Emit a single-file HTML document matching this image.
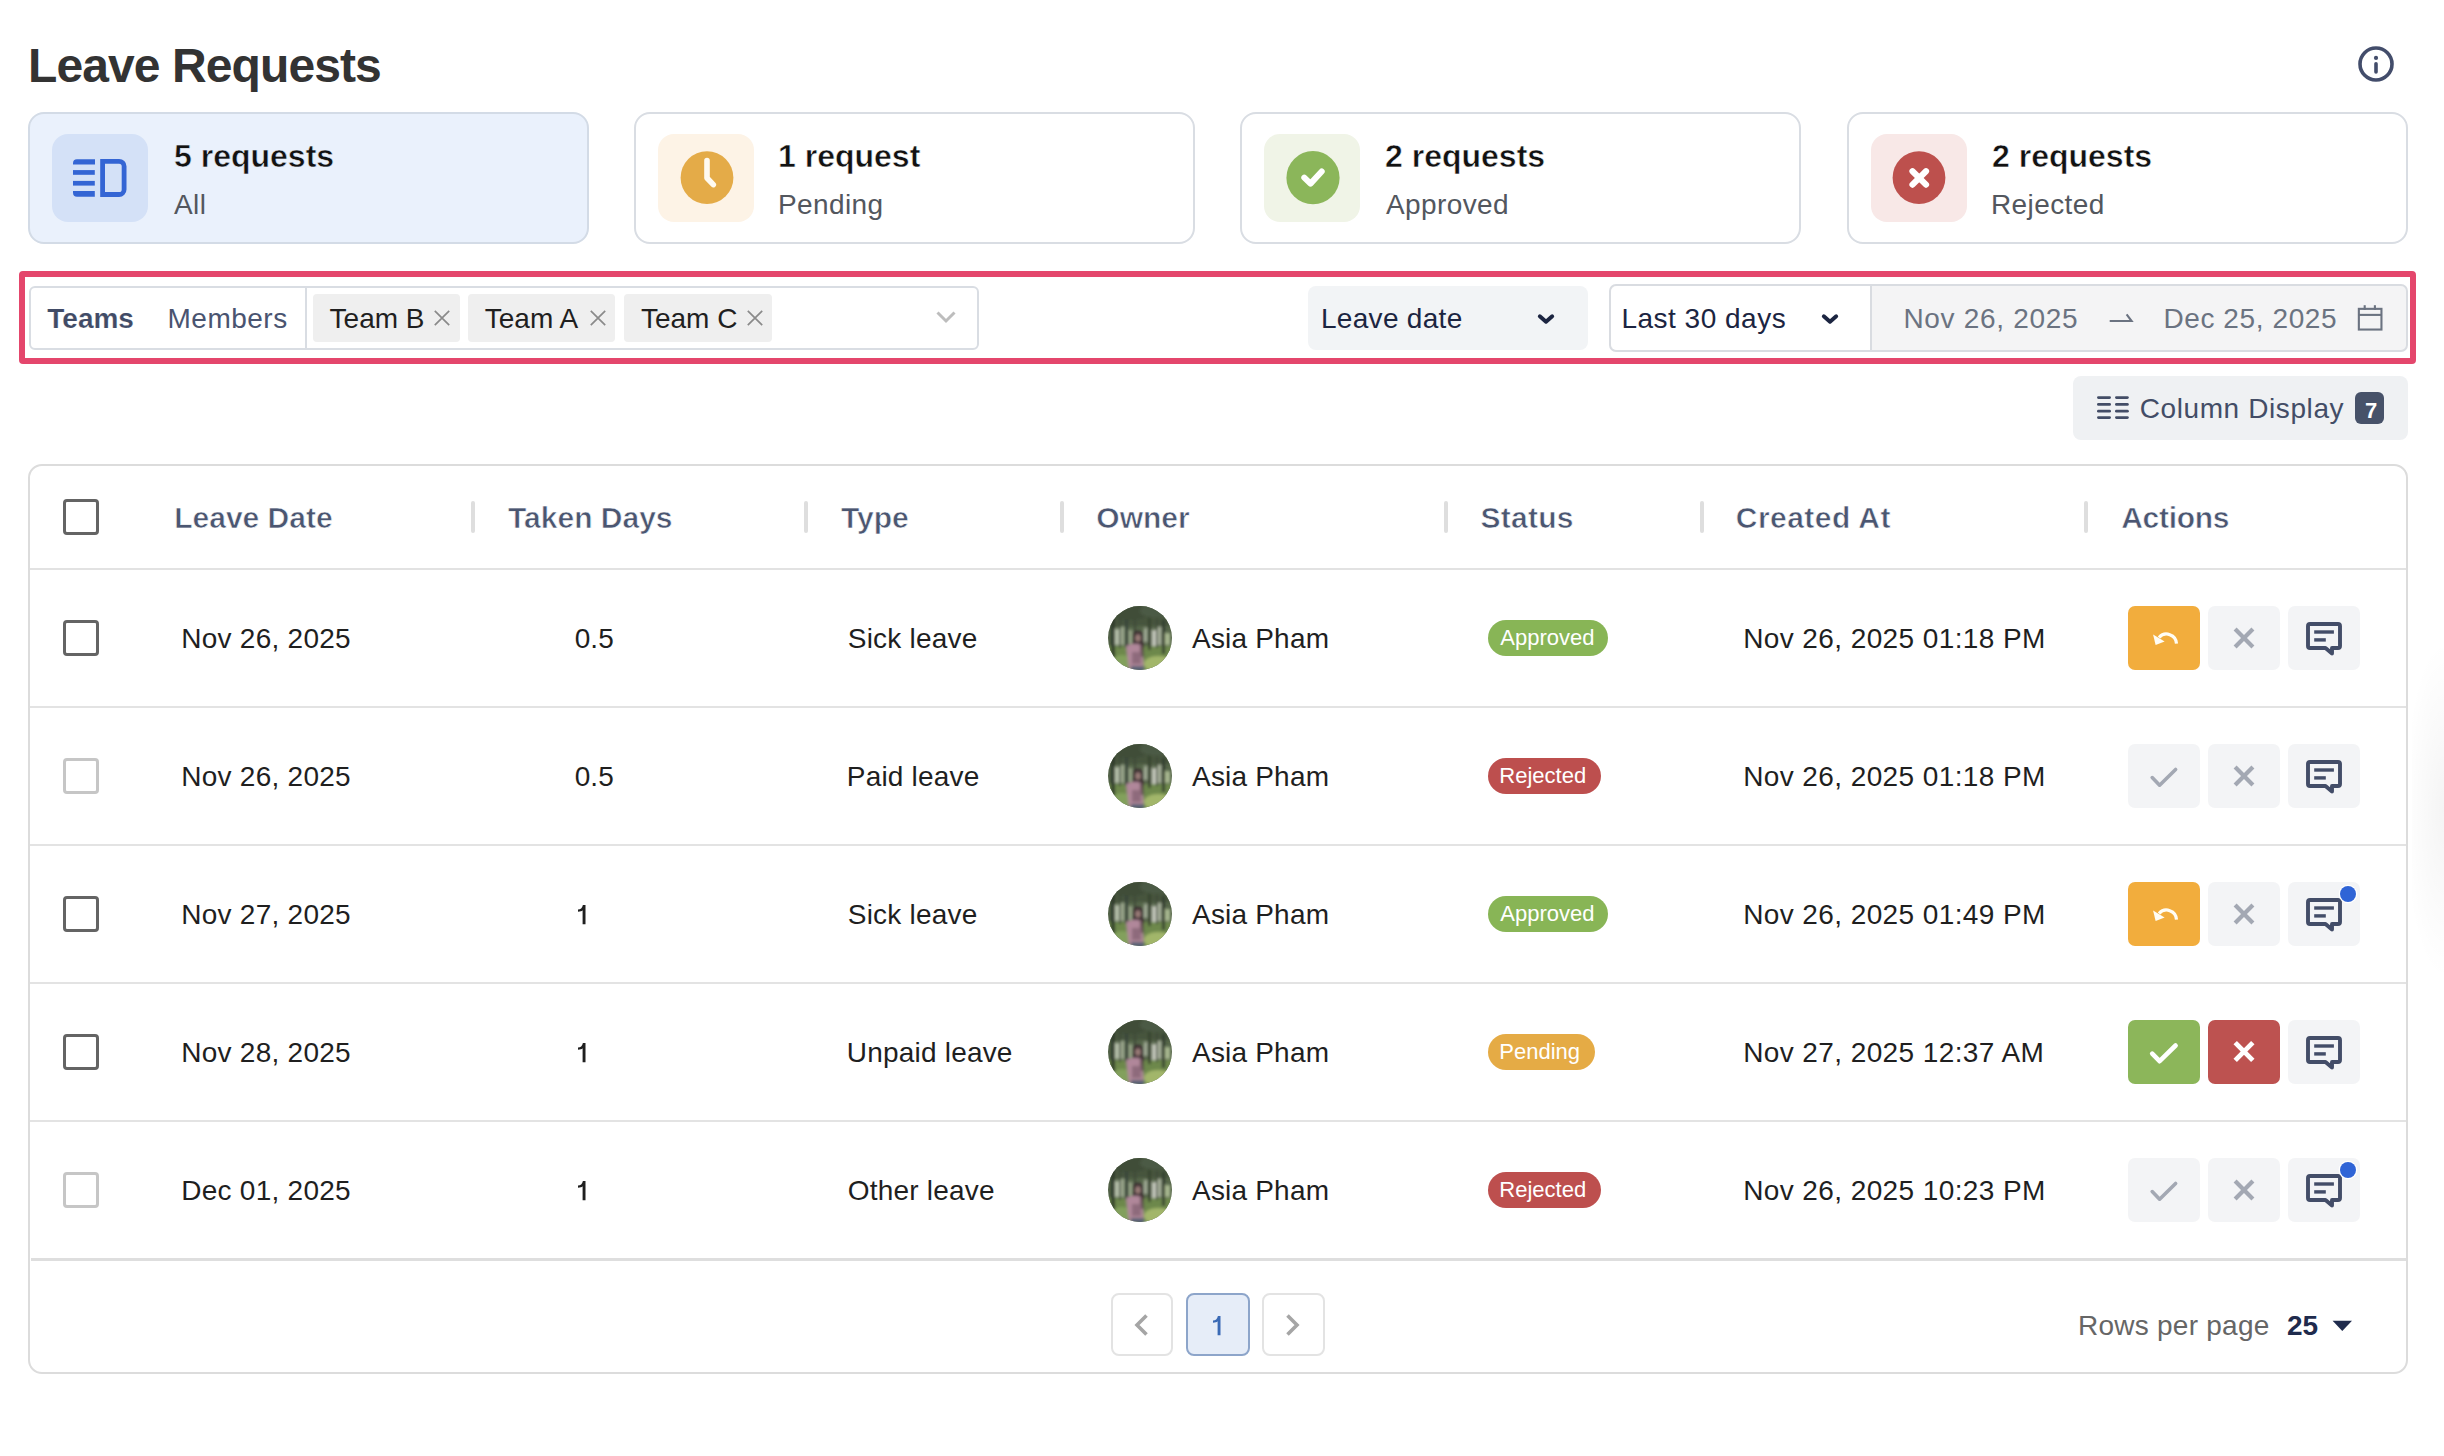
<!DOCTYPE html>
<html><head><meta charset="utf-8"><title>Leave Requests</title>
<style>
html,body{margin:0;padding:0;background:#ffffff;}
body{width:2444px;height:1456px;position:relative;overflow:hidden;font-family:'Liberation Sans', sans-serif;}
.t{position:absolute;line-height:0;white-space:nowrap;}
svg{display:block}
</style></head><body>
<svg style="position:absolute;left:2354px;top:42px" width="44" height="44" viewBox="0 0 44 44">
<circle cx="22" cy="22" r="16" fill="none" stroke="#434d6b" stroke-width="3.6"/>
<circle cx="22" cy="15.9" r="2.1" fill="#434d6b"/>
<line x1="22" y1="21.7" x2="22" y2="30" stroke="#434d6b" stroke-width="3.6" stroke-linecap="round"/>
</svg>
<div style="position:absolute;left:28px;top:112px;width:561px;height:132px;box-sizing:border-box;background:#eaf1fc;border:2px solid #d3dbe6;border-radius:16px;"></div>
<div style="position:absolute;left:52px;top:134px;width:96px;height:88px;box-sizing:border-box;background:#d4e1f7;border-radius:16px;"></div>
<div style="position:absolute;left:634px;top:112px;width:561px;height:132px;box-sizing:border-box;background:#ffffff;border:2px solid #d9dde3;border-radius:16px;"></div>
<div style="position:absolute;left:658px;top:134px;width:96px;height:88px;box-sizing:border-box;background:#fdf3e6;border-radius:16px;"></div>
<div style="position:absolute;left:1240px;top:112px;width:561px;height:132px;box-sizing:border-box;background:#ffffff;border:2px solid #d9dde3;border-radius:16px;"></div>
<div style="position:absolute;left:1264px;top:134px;width:96px;height:88px;box-sizing:border-box;background:#f0f4e7;border-radius:16px;"></div>
<div style="position:absolute;left:1847px;top:112px;width:561px;height:132px;box-sizing:border-box;background:#ffffff;border:2px solid #d9dde3;border-radius:16px;"></div>
<div style="position:absolute;left:1871px;top:134px;width:96px;height:88px;box-sizing:border-box;background:#f8e8e7;border-radius:16px;"></div>
<svg style="position:absolute;left:60px;top:150px" width="80" height="56" viewBox="0 0 80 56">
<g fill="#3465d4">
<path d="M13 9.3 h22 v5.2 h-22 a4 4 0 0 1 0 0 v-1.2 a4 4 0 0 1 4 -4 z"/>
<rect x="13" y="20.1" width="21.8" height="4.7"/>
<rect x="13" y="30.9" width="21.8" height="4.7"/>
<path d="M13 41 h21.8 v5.8 h-17.8 a4 4 0 0 1 -4 -4 z"/>
</g>
<path d="M42.6 11.3 h16.5 a5 5 0 0 1 5 5 v23.2 a5 5 0 0 1 -5 5 h-16.5 z" fill="none" stroke="#3465d4" stroke-width="4.8"/>
</svg>
<svg style="position:absolute;left:674px;top:145px" width="66" height="66" viewBox="0 0 66 66">
<circle cx="33" cy="32.7" r="26.4" fill="#e4ab48"/>
<path d="M33 15.5 V33 L39.3 39.6" fill="none" stroke="#fffaf0" stroke-width="5.6" stroke-linecap="round" stroke-linejoin="round"/>
</svg>
<svg style="position:absolute;left:1280px;top:145px" width="66" height="66" viewBox="0 0 66 66">
<circle cx="33" cy="32.7" r="26.6" fill="#8bb65a"/>
<path d="M24.3 32.6 L30.5 38.6 L41.7 26.5" fill="none" stroke="#ffffff" stroke-width="6" stroke-linecap="round" stroke-linejoin="round"/>
</svg>
<svg style="position:absolute;left:1886px;top:145px" width="66" height="66" viewBox="0 0 66 66">
<circle cx="33" cy="32.7" r="26.4" fill="#bd504d"/>
<path d="M26.5 26.2 L40 39.6 M40 26.2 L26.5 39.6" fill="none" stroke="#ffffff" stroke-width="6.2" stroke-linecap="round"/>
</svg>
<div style="position:absolute;left:19px;top:271px;width:2397px;height:93px;box-sizing:border-box;border:6px solid #e4466c;border-radius:4px;"></div>
<div style="position:absolute;left:29px;top:286px;width:950px;height:64px;box-sizing:border-box;border:2px solid #d9dde3;border-radius:6px;background:#fff;"></div>
<div style="position:absolute;left:305px;top:288px;width:2px;height:60px;box-sizing:border-box;background:#d9dde3;"></div>
<div style="position:absolute;left:313px;top:294px;width:146.7px;height:48px;box-sizing:border-box;background:#efefef;border-radius:4px;"></div>
<svg style="position:absolute;left:432.0px;top:308px" width="20" height="20" viewBox="0 0 20 20"><path d="M2.8 2.8 L17.2 17.2 M17.2 2.8 L2.8 17.2" stroke="#8a8a8a" stroke-width="1.7" fill="none"/></svg>
<div style="position:absolute;left:468.2px;top:294px;width:147.3px;height:48px;box-sizing:border-box;background:#efefef;border-radius:4px;"></div>
<svg style="position:absolute;left:587.8px;top:308px" width="20" height="20" viewBox="0 0 20 20"><path d="M2.8 2.8 L17.2 17.2 M17.2 2.8 L2.8 17.2" stroke="#8a8a8a" stroke-width="1.7" fill="none"/></svg>
<div style="position:absolute;left:624.3px;top:294px;width:148.20000000000005px;height:48px;box-sizing:border-box;background:#efefef;border-radius:4px;"></div>
<svg style="position:absolute;left:744.8px;top:308px" width="20" height="20" viewBox="0 0 20 20"><path d="M2.8 2.8 L17.2 17.2 M17.2 2.8 L2.8 17.2" stroke="#8a8a8a" stroke-width="1.7" fill="none"/></svg>
<svg style="position:absolute;left:934px;top:307px" width="24" height="20" viewBox="0 0 24 20"><path d="M3.5 5.5 L12 14 L20.5 5.5" stroke="#bdbdbd" stroke-width="3" fill="none"/></svg>
<div style="position:absolute;left:1308px;top:286px;width:280px;height:64px;box-sizing:border-box;background:#f2f4f6;border-radius:8px;"></div>
<svg style="position:absolute;left:1534px;top:308px" width="24" height="20" viewBox="0 0 24 20"><path d="M5.8 8.2 L12 13.8 L18.2 8.2" stroke="#1c2541" stroke-width="3.9" fill="none" stroke-linecap="round" stroke-linejoin="round"/></svg>
<div style="position:absolute;left:1608.5px;top:284px;width:799.5px;height:68px;box-sizing:border-box;border:2px solid #d9dce1;border-radius:7px;background:#f4f4f5;"></div>
<div style="position:absolute;left:1610.5px;top:286px;width:259.5px;height:64px;box-sizing:border-box;background:#fff;border-radius:6px 0 0 6px;"></div>
<div style="position:absolute;left:1869.5px;top:286px;width:2.0px;height:64px;box-sizing:border-box;background:#d9dce1;"></div>
<svg style="position:absolute;left:1818px;top:308px" width="24" height="20" viewBox="0 0 24 20"><path d="M5.8 8.2 L12 13.8 L18.2 8.2" stroke="#1c2541" stroke-width="3.9" fill="none" stroke-linecap="round" stroke-linejoin="round"/></svg>
<svg style="position:absolute;left:2106px;top:308px" width="30" height="20" viewBox="0 0 30 20"><path d="M3.7 13 H25.6 L20.6 6.4" stroke="#6b7381" stroke-width="2.1" fill="none" stroke-linejoin="miter"/></svg>
<svg style="position:absolute;left:2354px;top:302px" width="34" height="32" viewBox="0 0 34 32">
<rect x="4.85" y="6.85" width="22.6" height="20.7" fill="none" stroke="#6b7381" stroke-width="2.1"/>
<line x1="4.85" y1="12.9" x2="27.45" y2="12.9" stroke="#6b7381" stroke-width="2.1"/>
<line x1="10.7" y1="3.2" x2="10.7" y2="8" stroke="#6b7381" stroke-width="2.1"/>
<line x1="20.9" y1="3.2" x2="20.9" y2="8" stroke="#6b7381" stroke-width="2.1"/>
</svg>
<div style="position:absolute;left:2073px;top:376px;width:335px;height:64px;box-sizing:border-box;background:#eff1f3;border-radius:8px;"></div>
<svg style="position:absolute;left:2093px;top:392px" width="40" height="30" viewBox="0 0 40 30">
<g stroke="#434d66" stroke-width="2.8" stroke-linecap="round">
<line x1="5.4" y1="5.6" x2="16.6" y2="5.6"/><line x1="5.4" y1="12.4" x2="16.6" y2="12.4"/><line x1="5.4" y1="19.2" x2="16.6" y2="19.2"/><line x1="5.4" y1="25.6" x2="16.6" y2="25.6"/>
<line x1="23.4" y1="5.6" x2="34.4" y2="5.6"/><line x1="23.4" y1="12.4" x2="34.4" y2="12.4"/><line x1="23.4" y1="19.2" x2="34.4" y2="19.2"/><line x1="23.4" y1="25.6" x2="34.4" y2="25.6"/>
</g></svg>
<div style="position:absolute;left:2355px;top:392px;width:29px;height:32px;box-sizing:border-box;background:#475269;border-radius:6px;"></div>
<div style="position:absolute;left:28px;top:464px;width:2380px;height:910px;box-sizing:border-box;border:2px solid #dcdcdc;border-radius:14px;background:#fff;"></div>
<div style="position:absolute;left:30px;top:568px;width:2376px;height:2px;box-sizing:border-box;background:#e2e2e2;"></div>
<div style="position:absolute;left:63.2px;top:499px;width:35.599999999999994px;height:35.799999999999955px;box-sizing:border-box;border:3.8px solid #646464;border-radius:4px;"></div>
<div style="position:absolute;left:471px;top:501px;width:4px;height:32px;box-sizing:border-box;background:#dedede;border-radius:2px;"></div>
<div style="position:absolute;left:804px;top:501px;width:4px;height:32px;box-sizing:border-box;background:#dedede;border-radius:2px;"></div>
<div style="position:absolute;left:1060px;top:501px;width:4px;height:32px;box-sizing:border-box;background:#dedede;border-radius:2px;"></div>
<div style="position:absolute;left:1444px;top:501px;width:4px;height:32px;box-sizing:border-box;background:#dedede;border-radius:2px;"></div>
<div style="position:absolute;left:1699.5px;top:501px;width:4.0px;height:32px;box-sizing:border-box;background:#dedede;border-radius:2px;"></div>
<div style="position:absolute;left:2083.5px;top:501px;width:4.0px;height:32px;box-sizing:border-box;background:#dedede;border-radius:2px;"></div>
<div style="position:absolute;left:30px;top:706px;width:2376px;height:2px;box-sizing:border-box;background:#e3e3e3;"></div>
<div style="position:absolute;left:63.2px;top:620px;width:35.599999999999994px;height:35.799999999999955px;box-sizing:border-box;border:3.8px solid #646464;border-radius:4px;"></div>
<div style="position:absolute;left:1108px;top:606px;width:64px;height:64px;border-radius:50%;overflow:hidden"><svg width="64" height="64" viewBox="0 0 64 64"><defs><filter id="bl0" x="-20%" y="-20%" width="140%" height="140%"><feGaussianBlur stdDeviation="1.35"/></filter></defs>
<rect width="64" height="64" fill="#56664a"/>
<g filter="url(#bl0)">
<rect x="-4" y="-4" width="72" height="24" fill="#46553e"/>
<rect x="-4" y="40" width="72" height="28" fill="#6d884c"/>
<ellipse cx="50" cy="58" rx="14" ry="8" fill="#a2b66a"/>
<ellipse cx="14" cy="56" rx="10" ry="7" fill="#82a05c"/>
<rect x="7" y="23" width="4" height="16" fill="#b8c2ac"/>
<rect x="13" y="21" width="3" height="18" fill="#a6b298"/>
<rect x="21" y="24" width="3" height="14" fill="#9eab8e"/>
<rect x="36" y="22" width="3" height="14" fill="#aab4a0"/>
<rect x="44" y="24" width="4" height="16" fill="#c6c9be"/>
<rect x="50" y="21" width="3" height="18" fill="#b2baa6"/>
<rect x="57" y="27" width="5" height="12" fill="#a8b890"/>
<rect x="3" y="12" width="4" height="40" fill="#2e3a2a"/>
<rect x="11" y="10" width="2" height="32" fill="#3a4636"/>
<rect x="17" y="12" width="3" height="30" fill="#38443a"/>
<rect x="26" y="8" width="2" height="22" fill="#3e4a38"/>
<rect x="40" y="10" width="3" height="34" fill="#37432f"/>
<rect x="48" y="12" width="2" height="30" fill="#3d4938"/>
<rect x="54" y="14" width="3" height="34" fill="#323e2d"/>
<ellipse cx="22" cy="6" rx="20" ry="8" fill="#3f4d38"/>
<ellipse cx="48" cy="5" rx="16" ry="7" fill="#4b5a44"/>
<path d="M25 27 Q30 22 35 27 L36 42 L24 42 Z" fill="#3b2e30"/>
<ellipse cx="30" cy="32" rx="2.8" ry="3.8" fill="#9a7c78"/>
<path d="M18 40 Q25 36 34 39 L36 63 L21 64 Z" fill="#b0879a"/>
<rect x="32" y="37" width="4" height="14" fill="#3b2e30" opacity="0.55"/>
<rect x="24" y="46" width="9" height="12" fill="#8e6a7c"/>
<rect x="23" y="60" width="13" height="6" fill="#5a6274"/>
</g></svg>
</div>
<div style="position:absolute;left:1488px;top:620px;width:120px;height:36px;box-sizing:border-box;background:#88b556;border-radius:18px;"></div>
<div style="position:absolute;left:2128px;top:606px;width:72px;height:64px;box-sizing:border-box;background:#f2ad3d;border-radius:7px;"></div>
<svg style="position:absolute;left:2128px;top:606px" width="72" height="64" viewBox="0 0 72 64">
<path d="M48.5 37.6 A10 10 0 0 0 31 31.5" fill="none" stroke="#fffdf5" stroke-width="3.2"/>
<path d="M25.1 28.6 L27.6 38.9 L36.6 35.4 Z" fill="#fffdf5"/></svg>
<div style="position:absolute;left:2208px;top:606px;width:72px;height:64px;box-sizing:border-box;background:#f3f4f6;border-radius:7px;"></div>
<svg style="position:absolute;left:2208px;top:606px" width="72" height="64" viewBox="0 0 72 64"><path d="M27.1 23.1 L44.9 40.9 M44.9 23.1 L27.1 40.9" stroke="#a3a8b3" stroke-width="4.2" fill="none"/></svg>
<div style="position:absolute;left:2288px;top:606px;width:72px;height:64px;box-sizing:border-box;background:#f3f4f6;border-radius:7px;"></div>
<svg style="position:absolute;left:2288px;top:606px" width="72" height="64" viewBox="0 0 72 64">
<path d="M22 18 H50 a2 2 0 0 1 2 2 V40 a2 2 0 0 1 -2 2 H44 V47.5 L37.5 42 H22 a2 2 0 0 1 -2 -2 V20 a2 2 0 0 1 2 -2 Z" fill="none" stroke="#434d68" stroke-width="3.9" stroke-linejoin="round"/>
<rect x="26.2" y="24.3" width="19.7" height="3.4" fill="#434d68"/>
<rect x="26.2" y="32.2" width="11.6" height="3.4" fill="#434d68"/>
</svg>
<div style="position:absolute;left:30px;top:844px;width:2376px;height:2px;box-sizing:border-box;background:#e3e3e3;"></div>
<div style="position:absolute;left:63.2px;top:758px;width:35.599999999999994px;height:35.799999999999955px;box-sizing:border-box;border:3.8px solid #c6c6c6;border-radius:4px;"></div>
<div style="position:absolute;left:1108px;top:744px;width:64px;height:64px;border-radius:50%;overflow:hidden"><svg width="64" height="64" viewBox="0 0 64 64"><defs><filter id="bl1" x="-20%" y="-20%" width="140%" height="140%"><feGaussianBlur stdDeviation="1.35"/></filter></defs>
<rect width="64" height="64" fill="#56664a"/>
<g filter="url(#bl1)">
<rect x="-4" y="-4" width="72" height="24" fill="#46553e"/>
<rect x="-4" y="40" width="72" height="28" fill="#6d884c"/>
<ellipse cx="50" cy="58" rx="14" ry="8" fill="#a2b66a"/>
<ellipse cx="14" cy="56" rx="10" ry="7" fill="#82a05c"/>
<rect x="7" y="23" width="4" height="16" fill="#b8c2ac"/>
<rect x="13" y="21" width="3" height="18" fill="#a6b298"/>
<rect x="21" y="24" width="3" height="14" fill="#9eab8e"/>
<rect x="36" y="22" width="3" height="14" fill="#aab4a0"/>
<rect x="44" y="24" width="4" height="16" fill="#c6c9be"/>
<rect x="50" y="21" width="3" height="18" fill="#b2baa6"/>
<rect x="57" y="27" width="5" height="12" fill="#a8b890"/>
<rect x="3" y="12" width="4" height="40" fill="#2e3a2a"/>
<rect x="11" y="10" width="2" height="32" fill="#3a4636"/>
<rect x="17" y="12" width="3" height="30" fill="#38443a"/>
<rect x="26" y="8" width="2" height="22" fill="#3e4a38"/>
<rect x="40" y="10" width="3" height="34" fill="#37432f"/>
<rect x="48" y="12" width="2" height="30" fill="#3d4938"/>
<rect x="54" y="14" width="3" height="34" fill="#323e2d"/>
<ellipse cx="22" cy="6" rx="20" ry="8" fill="#3f4d38"/>
<ellipse cx="48" cy="5" rx="16" ry="7" fill="#4b5a44"/>
<path d="M25 27 Q30 22 35 27 L36 42 L24 42 Z" fill="#3b2e30"/>
<ellipse cx="30" cy="32" rx="2.8" ry="3.8" fill="#9a7c78"/>
<path d="M18 40 Q25 36 34 39 L36 63 L21 64 Z" fill="#b0879a"/>
<rect x="32" y="37" width="4" height="14" fill="#3b2e30" opacity="0.55"/>
<rect x="24" y="46" width="9" height="12" fill="#8e6a7c"/>
<rect x="23" y="60" width="13" height="6" fill="#5a6274"/>
</g></svg>
</div>
<div style="position:absolute;left:1488px;top:758px;width:113px;height:36px;box-sizing:border-box;background:#bd4f4e;border-radius:18px;"></div>
<div style="position:absolute;left:2128px;top:744px;width:72px;height:64px;box-sizing:border-box;background:#f3f4f6;border-radius:7px;"></div>
<svg style="position:absolute;left:2128px;top:744px" width="72" height="64" viewBox="0 0 72 64"><path d="M24.2 33.6 L31.6 41.2 L47.6 25.5" stroke="#a3a8b3" stroke-width="3.6" fill="none" stroke-linecap="round" stroke-linejoin="round"/></svg>
<div style="position:absolute;left:2208px;top:744px;width:72px;height:64px;box-sizing:border-box;background:#f3f4f6;border-radius:7px;"></div>
<svg style="position:absolute;left:2208px;top:744px" width="72" height="64" viewBox="0 0 72 64"><path d="M27.1 23.1 L44.9 40.9 M44.9 23.1 L27.1 40.9" stroke="#a3a8b3" stroke-width="4.2" fill="none"/></svg>
<div style="position:absolute;left:2288px;top:744px;width:72px;height:64px;box-sizing:border-box;background:#f3f4f6;border-radius:7px;"></div>
<svg style="position:absolute;left:2288px;top:744px" width="72" height="64" viewBox="0 0 72 64">
<path d="M22 18 H50 a2 2 0 0 1 2 2 V40 a2 2 0 0 1 -2 2 H44 V47.5 L37.5 42 H22 a2 2 0 0 1 -2 -2 V20 a2 2 0 0 1 2 -2 Z" fill="none" stroke="#434d68" stroke-width="3.9" stroke-linejoin="round"/>
<rect x="26.2" y="24.3" width="19.7" height="3.4" fill="#434d68"/>
<rect x="26.2" y="32.2" width="11.6" height="3.4" fill="#434d68"/>
</svg>
<div style="position:absolute;left:30px;top:982px;width:2376px;height:2px;box-sizing:border-box;background:#e3e3e3;"></div>
<div style="position:absolute;left:63.2px;top:896px;width:35.599999999999994px;height:35.799999999999955px;box-sizing:border-box;border:3.8px solid #646464;border-radius:4px;"></div>
<svg style="position:absolute;left:577.9px;top:904.6px" width="9" height="20" viewBox="0 0 9 20"><path d="M7.5 0 V19.3 H4.6 V5.2 C3.8 6.2 2.2 6.6 0 6.7 V4.6 C2.6 4.4 4.2 3.2 4.9 0 Z" fill="#1f1f1f"/></svg>
<div style="position:absolute;left:1108px;top:882px;width:64px;height:64px;border-radius:50%;overflow:hidden"><svg width="64" height="64" viewBox="0 0 64 64"><defs><filter id="bl2" x="-20%" y="-20%" width="140%" height="140%"><feGaussianBlur stdDeviation="1.35"/></filter></defs>
<rect width="64" height="64" fill="#56664a"/>
<g filter="url(#bl2)">
<rect x="-4" y="-4" width="72" height="24" fill="#46553e"/>
<rect x="-4" y="40" width="72" height="28" fill="#6d884c"/>
<ellipse cx="50" cy="58" rx="14" ry="8" fill="#a2b66a"/>
<ellipse cx="14" cy="56" rx="10" ry="7" fill="#82a05c"/>
<rect x="7" y="23" width="4" height="16" fill="#b8c2ac"/>
<rect x="13" y="21" width="3" height="18" fill="#a6b298"/>
<rect x="21" y="24" width="3" height="14" fill="#9eab8e"/>
<rect x="36" y="22" width="3" height="14" fill="#aab4a0"/>
<rect x="44" y="24" width="4" height="16" fill="#c6c9be"/>
<rect x="50" y="21" width="3" height="18" fill="#b2baa6"/>
<rect x="57" y="27" width="5" height="12" fill="#a8b890"/>
<rect x="3" y="12" width="4" height="40" fill="#2e3a2a"/>
<rect x="11" y="10" width="2" height="32" fill="#3a4636"/>
<rect x="17" y="12" width="3" height="30" fill="#38443a"/>
<rect x="26" y="8" width="2" height="22" fill="#3e4a38"/>
<rect x="40" y="10" width="3" height="34" fill="#37432f"/>
<rect x="48" y="12" width="2" height="30" fill="#3d4938"/>
<rect x="54" y="14" width="3" height="34" fill="#323e2d"/>
<ellipse cx="22" cy="6" rx="20" ry="8" fill="#3f4d38"/>
<ellipse cx="48" cy="5" rx="16" ry="7" fill="#4b5a44"/>
<path d="M25 27 Q30 22 35 27 L36 42 L24 42 Z" fill="#3b2e30"/>
<ellipse cx="30" cy="32" rx="2.8" ry="3.8" fill="#9a7c78"/>
<path d="M18 40 Q25 36 34 39 L36 63 L21 64 Z" fill="#b0879a"/>
<rect x="32" y="37" width="4" height="14" fill="#3b2e30" opacity="0.55"/>
<rect x="24" y="46" width="9" height="12" fill="#8e6a7c"/>
<rect x="23" y="60" width="13" height="6" fill="#5a6274"/>
</g></svg>
</div>
<div style="position:absolute;left:1488px;top:896px;width:120px;height:36px;box-sizing:border-box;background:#88b556;border-radius:18px;"></div>
<div style="position:absolute;left:2128px;top:882px;width:72px;height:64px;box-sizing:border-box;background:#f2ad3d;border-radius:7px;"></div>
<svg style="position:absolute;left:2128px;top:882px" width="72" height="64" viewBox="0 0 72 64">
<path d="M48.5 37.6 A10 10 0 0 0 31 31.5" fill="none" stroke="#fffdf5" stroke-width="3.2"/>
<path d="M25.1 28.6 L27.6 38.9 L36.6 35.4 Z" fill="#fffdf5"/></svg>
<div style="position:absolute;left:2208px;top:882px;width:72px;height:64px;box-sizing:border-box;background:#f3f4f6;border-radius:7px;"></div>
<svg style="position:absolute;left:2208px;top:882px" width="72" height="64" viewBox="0 0 72 64"><path d="M27.1 23.1 L44.9 40.9 M44.9 23.1 L27.1 40.9" stroke="#a3a8b3" stroke-width="4.2" fill="none"/></svg>
<div style="position:absolute;left:2288px;top:882px;width:72px;height:64px;box-sizing:border-box;background:#f3f4f6;border-radius:7px;"></div>
<svg style="position:absolute;left:2288px;top:882px" width="72" height="64" viewBox="0 0 72 64">
<path d="M22 18 H50 a2 2 0 0 1 2 2 V40 a2 2 0 0 1 -2 2 H44 V47.5 L37.5 42 H22 a2 2 0 0 1 -2 -2 V20 a2 2 0 0 1 2 -2 Z" fill="none" stroke="#434d68" stroke-width="3.9" stroke-linejoin="round"/>
<rect x="26.2" y="24.3" width="19.7" height="3.4" fill="#434d68"/>
<rect x="26.2" y="32.2" width="11.6" height="3.4" fill="#434d68"/>
</svg>
<div style="position:absolute;left:2339.7000000000003px;top:885.55px;width:16.4px;height:16.4px;border-radius:50%;background:#2f64d6;box-shadow:0 0 0 1.3px #fff;"></div>
<div style="position:absolute;left:30px;top:1120px;width:2376px;height:2px;box-sizing:border-box;background:#e3e3e3;"></div>
<div style="position:absolute;left:63.2px;top:1034px;width:35.599999999999994px;height:35.799999999999955px;box-sizing:border-box;border:3.8px solid #646464;border-radius:4px;"></div>
<svg style="position:absolute;left:577.9px;top:1042.6px" width="9" height="20" viewBox="0 0 9 20"><path d="M7.5 0 V19.3 H4.6 V5.2 C3.8 6.2 2.2 6.6 0 6.7 V4.6 C2.6 4.4 4.2 3.2 4.9 0 Z" fill="#1f1f1f"/></svg>
<div style="position:absolute;left:1108px;top:1020px;width:64px;height:64px;border-radius:50%;overflow:hidden"><svg width="64" height="64" viewBox="0 0 64 64"><defs><filter id="bl3" x="-20%" y="-20%" width="140%" height="140%"><feGaussianBlur stdDeviation="1.35"/></filter></defs>
<rect width="64" height="64" fill="#56664a"/>
<g filter="url(#bl3)">
<rect x="-4" y="-4" width="72" height="24" fill="#46553e"/>
<rect x="-4" y="40" width="72" height="28" fill="#6d884c"/>
<ellipse cx="50" cy="58" rx="14" ry="8" fill="#a2b66a"/>
<ellipse cx="14" cy="56" rx="10" ry="7" fill="#82a05c"/>
<rect x="7" y="23" width="4" height="16" fill="#b8c2ac"/>
<rect x="13" y="21" width="3" height="18" fill="#a6b298"/>
<rect x="21" y="24" width="3" height="14" fill="#9eab8e"/>
<rect x="36" y="22" width="3" height="14" fill="#aab4a0"/>
<rect x="44" y="24" width="4" height="16" fill="#c6c9be"/>
<rect x="50" y="21" width="3" height="18" fill="#b2baa6"/>
<rect x="57" y="27" width="5" height="12" fill="#a8b890"/>
<rect x="3" y="12" width="4" height="40" fill="#2e3a2a"/>
<rect x="11" y="10" width="2" height="32" fill="#3a4636"/>
<rect x="17" y="12" width="3" height="30" fill="#38443a"/>
<rect x="26" y="8" width="2" height="22" fill="#3e4a38"/>
<rect x="40" y="10" width="3" height="34" fill="#37432f"/>
<rect x="48" y="12" width="2" height="30" fill="#3d4938"/>
<rect x="54" y="14" width="3" height="34" fill="#323e2d"/>
<ellipse cx="22" cy="6" rx="20" ry="8" fill="#3f4d38"/>
<ellipse cx="48" cy="5" rx="16" ry="7" fill="#4b5a44"/>
<path d="M25 27 Q30 22 35 27 L36 42 L24 42 Z" fill="#3b2e30"/>
<ellipse cx="30" cy="32" rx="2.8" ry="3.8" fill="#9a7c78"/>
<path d="M18 40 Q25 36 34 39 L36 63 L21 64 Z" fill="#b0879a"/>
<rect x="32" y="37" width="4" height="14" fill="#3b2e30" opacity="0.55"/>
<rect x="24" y="46" width="9" height="12" fill="#8e6a7c"/>
<rect x="23" y="60" width="13" height="6" fill="#5a6274"/>
</g></svg>
</div>
<div style="position:absolute;left:1488px;top:1034px;width:107px;height:36px;box-sizing:border-box;background:#e5ab45;border-radius:18px;"></div>
<div style="position:absolute;left:2128px;top:1020px;width:72px;height:64px;box-sizing:border-box;background:#8cb65a;border-radius:7px;"></div>
<svg style="position:absolute;left:2128px;top:1020px" width="72" height="64" viewBox="0 0 72 64"><path d="M24.2 33.6 L31.6 41.2 L47.6 25.5" stroke="#ffffff" stroke-width="4.6" fill="none" stroke-linecap="round" stroke-linejoin="round"/></svg>
<div style="position:absolute;left:2208px;top:1020px;width:72px;height:64px;box-sizing:border-box;background:#bd5250;border-radius:7px;"></div>
<svg style="position:absolute;left:2208px;top:1020px" width="72" height="64" viewBox="0 0 72 64"><path d="M27.2 22.6 L44.8 40.4 M44.8 22.6 L27.2 40.4" stroke="#ffffff" stroke-width="4.8" fill="none"/></svg>
<div style="position:absolute;left:2288px;top:1020px;width:72px;height:64px;box-sizing:border-box;background:#f3f4f6;border-radius:7px;"></div>
<svg style="position:absolute;left:2288px;top:1020px" width="72" height="64" viewBox="0 0 72 64">
<path d="M22 18 H50 a2 2 0 0 1 2 2 V40 a2 2 0 0 1 -2 2 H44 V47.5 L37.5 42 H22 a2 2 0 0 1 -2 -2 V20 a2 2 0 0 1 2 -2 Z" fill="none" stroke="#434d68" stroke-width="3.9" stroke-linejoin="round"/>
<rect x="26.2" y="24.3" width="19.7" height="3.4" fill="#434d68"/>
<rect x="26.2" y="32.2" width="11.6" height="3.4" fill="#434d68"/>
</svg>
<div style="position:absolute;left:63.2px;top:1172px;width:35.599999999999994px;height:35.799999999999955px;box-sizing:border-box;border:3.8px solid #c6c6c6;border-radius:4px;"></div>
<svg style="position:absolute;left:577.9px;top:1180.6px" width="9" height="20" viewBox="0 0 9 20"><path d="M7.5 0 V19.3 H4.6 V5.2 C3.8 6.2 2.2 6.6 0 6.7 V4.6 C2.6 4.4 4.2 3.2 4.9 0 Z" fill="#1f1f1f"/></svg>
<div style="position:absolute;left:1108px;top:1158px;width:64px;height:64px;border-radius:50%;overflow:hidden"><svg width="64" height="64" viewBox="0 0 64 64"><defs><filter id="bl4" x="-20%" y="-20%" width="140%" height="140%"><feGaussianBlur stdDeviation="1.35"/></filter></defs>
<rect width="64" height="64" fill="#56664a"/>
<g filter="url(#bl4)">
<rect x="-4" y="-4" width="72" height="24" fill="#46553e"/>
<rect x="-4" y="40" width="72" height="28" fill="#6d884c"/>
<ellipse cx="50" cy="58" rx="14" ry="8" fill="#a2b66a"/>
<ellipse cx="14" cy="56" rx="10" ry="7" fill="#82a05c"/>
<rect x="7" y="23" width="4" height="16" fill="#b8c2ac"/>
<rect x="13" y="21" width="3" height="18" fill="#a6b298"/>
<rect x="21" y="24" width="3" height="14" fill="#9eab8e"/>
<rect x="36" y="22" width="3" height="14" fill="#aab4a0"/>
<rect x="44" y="24" width="4" height="16" fill="#c6c9be"/>
<rect x="50" y="21" width="3" height="18" fill="#b2baa6"/>
<rect x="57" y="27" width="5" height="12" fill="#a8b890"/>
<rect x="3" y="12" width="4" height="40" fill="#2e3a2a"/>
<rect x="11" y="10" width="2" height="32" fill="#3a4636"/>
<rect x="17" y="12" width="3" height="30" fill="#38443a"/>
<rect x="26" y="8" width="2" height="22" fill="#3e4a38"/>
<rect x="40" y="10" width="3" height="34" fill="#37432f"/>
<rect x="48" y="12" width="2" height="30" fill="#3d4938"/>
<rect x="54" y="14" width="3" height="34" fill="#323e2d"/>
<ellipse cx="22" cy="6" rx="20" ry="8" fill="#3f4d38"/>
<ellipse cx="48" cy="5" rx="16" ry="7" fill="#4b5a44"/>
<path d="M25 27 Q30 22 35 27 L36 42 L24 42 Z" fill="#3b2e30"/>
<ellipse cx="30" cy="32" rx="2.8" ry="3.8" fill="#9a7c78"/>
<path d="M18 40 Q25 36 34 39 L36 63 L21 64 Z" fill="#b0879a"/>
<rect x="32" y="37" width="4" height="14" fill="#3b2e30" opacity="0.55"/>
<rect x="24" y="46" width="9" height="12" fill="#8e6a7c"/>
<rect x="23" y="60" width="13" height="6" fill="#5a6274"/>
</g></svg>
</div>
<div style="position:absolute;left:1488px;top:1172px;width:113px;height:36px;box-sizing:border-box;background:#bd4f4e;border-radius:18px;"></div>
<div style="position:absolute;left:2128px;top:1158px;width:72px;height:64px;box-sizing:border-box;background:#f3f4f6;border-radius:7px;"></div>
<svg style="position:absolute;left:2128px;top:1158px" width="72" height="64" viewBox="0 0 72 64"><path d="M24.2 33.6 L31.6 41.2 L47.6 25.5" stroke="#a3a8b3" stroke-width="3.6" fill="none" stroke-linecap="round" stroke-linejoin="round"/></svg>
<div style="position:absolute;left:2208px;top:1158px;width:72px;height:64px;box-sizing:border-box;background:#f3f4f6;border-radius:7px;"></div>
<svg style="position:absolute;left:2208px;top:1158px" width="72" height="64" viewBox="0 0 72 64"><path d="M27.1 23.1 L44.9 40.9 M44.9 23.1 L27.1 40.9" stroke="#a3a8b3" stroke-width="4.2" fill="none"/></svg>
<div style="position:absolute;left:2288px;top:1158px;width:72px;height:64px;box-sizing:border-box;background:#f3f4f6;border-radius:7px;"></div>
<svg style="position:absolute;left:2288px;top:1158px" width="72" height="64" viewBox="0 0 72 64">
<path d="M22 18 H50 a2 2 0 0 1 2 2 V40 a2 2 0 0 1 -2 2 H44 V47.5 L37.5 42 H22 a2 2 0 0 1 -2 -2 V20 a2 2 0 0 1 2 -2 Z" fill="none" stroke="#434d68" stroke-width="3.9" stroke-linejoin="round"/>
<rect x="26.2" y="24.3" width="19.7" height="3.4" fill="#434d68"/>
<rect x="26.2" y="32.2" width="11.6" height="3.4" fill="#434d68"/>
</svg>
<div style="position:absolute;left:2339.7000000000003px;top:1161.55px;width:16.4px;height:16.4px;border-radius:50%;background:#2f64d6;box-shadow:0 0 0 1.3px #fff;"></div>
<div style="position:absolute;left:31px;top:1258px;width:2375px;height:3px;box-sizing:border-box;background:#dedede;"></div>
<div style="position:absolute;left:1110.6px;top:1293.3px;width:62.90000000000009px;height:63.100000000000136px;box-sizing:border-box;border:2px solid #e3e3e3;border-radius:8px;background:#fff;"></div>
<div style="position:absolute;left:1262px;top:1293.3px;width:63.40000000000009px;height:63.100000000000136px;box-sizing:border-box;border:2px solid #e3e3e3;border-radius:8px;background:#fff;"></div>
<div style="position:absolute;left:1186.2px;top:1293.3px;width:63.59999999999991px;height:63.100000000000136px;box-sizing:border-box;border:2px solid #8da5ca;border-radius:8px;background:#e6edf8;"></div>
<svg style="position:absolute;left:1126px;top:1310px" width="30" height="30" viewBox="0 0 30 30"><path d="M20.5 5.5 L11 15 L20.5 24.5" stroke="#a5a5a5" stroke-width="3.6" fill="none"/></svg>
<svg style="position:absolute;left:1278px;top:1310px" width="30" height="30" viewBox="0 0 30 30"><path d="M9.5 5.5 L19 15 L9.5 24.5" stroke="#a5a5a5" stroke-width="3.6" fill="none"/></svg>
<svg style="position:absolute;left:1212.5px;top:1315.6px" width="9" height="20" viewBox="0 0 9 20"><path d="M7.5 0 V19.3 H4.6 V5.2 C3.8 6.2 2.2 6.6 0 6.7 V4.6 C2.6 4.4 4.2 3.2 4.9 0 Z" fill="#3a6ab5"/></svg>
<svg style="position:absolute;left:2330px;top:1318px" width="24" height="16" viewBox="0 0 24 16"><path d="M2.6 2.7 H22 L12.3 12.9 Z" fill="#1f2b4d"/></svg>
<div style="position:absolute;left:2412px;top:620px;width:32px;height:380px;background:radial-gradient(ellipse 40px 170px at 100% 50%, rgba(0,0,0,0.045), rgba(0,0,0,0));"></div>
<div class="t" style="left:28.00px;top:65.50px;font-size:48px;font-weight:700;color:#333333;letter-spacing:-0.9px;">Leave Requests</div>
<div class="t" style="left:174.00px;top:156.00px;font-size:32px;font-weight:700;color:#121212;letter-spacing:0px;-webkit-text-stroke:0.5px #eaf1fc;">5 requests</div>
<div class="t" style="left:174.00px;top:205.00px;font-size:28px;font-weight:400;color:#53575e;letter-spacing:0.4px;">All</div>
<div class="t" style="left:778.00px;top:156.00px;font-size:32px;font-weight:700;color:#121212;letter-spacing:0px;-webkit-text-stroke:0.5px #ffffff;">1 request</div>
<div class="t" style="left:778.00px;top:205.00px;font-size:28px;font-weight:400;color:#53575e;letter-spacing:0.4px;">Pending</div>
<div class="t" style="left:1385.00px;top:156.00px;font-size:32px;font-weight:700;color:#121212;letter-spacing:0px;-webkit-text-stroke:0.5px #ffffff;">2 requests</div>
<div class="t" style="left:1386.00px;top:205.00px;font-size:28px;font-weight:400;color:#53575e;letter-spacing:0.4px;">Approved</div>
<div class="t" style="left:1992.00px;top:156.00px;font-size:32px;font-weight:700;color:#121212;letter-spacing:0px;-webkit-text-stroke:0.5px #ffffff;">2 requests</div>
<div class="t" style="left:1991.00px;top:205.00px;font-size:28px;font-weight:400;color:#53575e;letter-spacing:0.4px;">Rejected</div>
<div class="t" style="left:47.30px;top:319.00px;font-size:28px;font-weight:700;color:#414b66;-webkit-text-stroke:0.15px #fff;">Teams</div>
<div class="t" style="left:167.50px;top:319.00px;font-size:28px;font-weight:400;color:#4a5470;letter-spacing:0.5px;">Members</div>
<div class="t" style="left:329.60px;top:319.40px;font-size:28px;font-weight:400;color:#1f1f1f;">Team B</div>
<div class="t" style="left:484.80px;top:319.40px;font-size:28px;font-weight:400;color:#1f1f1f;">Team A</div>
<div class="t" style="left:640.90px;top:319.40px;font-size:28px;font-weight:400;color:#1f1f1f;">Team C</div>
<div class="t" style="left:1321.00px;top:319.00px;font-size:28px;font-weight:400;color:#1c2541;letter-spacing:0.3px;">Leave date</div>
<div class="t" style="left:1621.40px;top:319.00px;font-size:28px;font-weight:400;color:#1c2541;letter-spacing:0.5px;">Last 30 days</div>
<div class="t" style="left:1903.40px;top:319.00px;font-size:28px;font-weight:400;color:#6b7381;letter-spacing:0.7px;">Nov 26, 2025</div>
<div class="t" style="left:2163.40px;top:319.00px;font-size:28px;font-weight:400;color:#6b7381;letter-spacing:0.6px;">Dec 25, 2025</div>
<div class="t" style="left:2139.70px;top:409.20px;font-size:28px;font-weight:400;color:#434d66;letter-spacing:0.6px;">Column Display</div>
<div class="t" style="left:2365.00px;top:410.50px;font-size:22px;font-weight:700;color:#ffffff;">7</div>
<div class="t" style="left:174.20px;top:517.80px;font-size:30px;font-weight:700;color:#4b5671;letter-spacing:0px;-webkit-text-stroke:0.6px #fff;">Leave Date</div>
<div class="t" style="left:508.00px;top:517.80px;font-size:30px;font-weight:700;color:#4b5671;letter-spacing:0px;-webkit-text-stroke:0.6px #fff;">Taken Days</div>
<div class="t" style="left:841.00px;top:517.80px;font-size:30px;font-weight:700;color:#4b5671;letter-spacing:0px;-webkit-text-stroke:0.6px #fff;">Type</div>
<div class="t" style="left:1096.30px;top:517.80px;font-size:30px;font-weight:700;color:#4b5671;letter-spacing:0px;-webkit-text-stroke:0.6px #fff;">Owner</div>
<div class="t" style="left:1480.60px;top:517.80px;font-size:30px;font-weight:700;color:#4b5671;letter-spacing:0.25px;-webkit-text-stroke:0.6px #fff;">Status</div>
<div class="t" style="left:1735.80px;top:517.80px;font-size:30px;font-weight:700;color:#4b5671;letter-spacing:0.45px;-webkit-text-stroke:0.6px #fff;">Created At</div>
<div class="t" style="left:2121.20px;top:517.80px;font-size:30px;font-weight:700;color:#4b5671;letter-spacing:-0.3px;-webkit-text-stroke:0.6px #fff;">Actions</div>
<div class="t" style="left:181.30px;top:639.00px;font-size:28px;font-weight:400;color:#1f1f1f;letter-spacing:0.25px;">Nov 26, 2025</div>
<div class="t" style="left:574.80px;top:639.00px;font-size:28px;font-weight:400;color:#1f1f1f;">0.5</div>
<div class="t" style="left:847.80px;top:639.00px;font-size:28px;font-weight:400;color:#1f1f1f;letter-spacing:0.2px;">Sick leave</div>
<div class="t" style="left:1192.00px;top:639.00px;font-size:28px;font-weight:400;color:#1f1f1f;letter-spacing:0.2px;">Asia Pham</div>
<div class="t" style="left:1500.30px;top:637.70px;font-size:22px;font-weight:400;color:#ffffff;">Approved</div>
<div class="t" style="left:1743.20px;top:639.00px;font-size:28px;font-weight:400;color:#1f1f1f;letter-spacing:0.4px;">Nov 26, 2025 01:18 PM</div>
<div class="t" style="left:181.30px;top:777.00px;font-size:28px;font-weight:400;color:#1f1f1f;letter-spacing:0.25px;">Nov 26, 2025</div>
<div class="t" style="left:574.80px;top:777.00px;font-size:28px;font-weight:400;color:#1f1f1f;">0.5</div>
<div class="t" style="left:846.80px;top:777.00px;font-size:28px;font-weight:400;color:#1f1f1f;letter-spacing:0.2px;">Paid leave</div>
<div class="t" style="left:1192.00px;top:777.00px;font-size:28px;font-weight:400;color:#1f1f1f;letter-spacing:0.2px;">Asia Pham</div>
<div class="t" style="left:1499.30px;top:775.70px;font-size:22px;font-weight:400;color:#ffffff;">Rejected</div>
<div class="t" style="left:1743.20px;top:777.00px;font-size:28px;font-weight:400;color:#1f1f1f;letter-spacing:0.4px;">Nov 26, 2025 01:18 PM</div>
<div class="t" style="left:181.30px;top:915.00px;font-size:28px;font-weight:400;color:#1f1f1f;letter-spacing:0.25px;">Nov 27, 2025</div>
<div class="t" style="left:847.80px;top:915.00px;font-size:28px;font-weight:400;color:#1f1f1f;letter-spacing:0.2px;">Sick leave</div>
<div class="t" style="left:1192.00px;top:915.00px;font-size:28px;font-weight:400;color:#1f1f1f;letter-spacing:0.2px;">Asia Pham</div>
<div class="t" style="left:1500.30px;top:913.70px;font-size:22px;font-weight:400;color:#ffffff;">Approved</div>
<div class="t" style="left:1743.20px;top:915.00px;font-size:28px;font-weight:400;color:#1f1f1f;letter-spacing:0.4px;">Nov 26, 2025 01:49 PM</div>
<div class="t" style="left:181.30px;top:1053.00px;font-size:28px;font-weight:400;color:#1f1f1f;letter-spacing:0.25px;">Nov 28, 2025</div>
<div class="t" style="left:846.80px;top:1053.00px;font-size:28px;font-weight:400;color:#1f1f1f;letter-spacing:0.2px;">Unpaid leave</div>
<div class="t" style="left:1192.00px;top:1053.00px;font-size:28px;font-weight:400;color:#1f1f1f;letter-spacing:0.2px;">Asia Pham</div>
<div class="t" style="left:1499.30px;top:1051.70px;font-size:22px;font-weight:400;color:#ffffff;">Pending</div>
<div class="t" style="left:1743.20px;top:1053.00px;font-size:28px;font-weight:400;color:#1f1f1f;letter-spacing:0.4px;">Nov 27, 2025 12:37 AM</div>
<div class="t" style="left:181.30px;top:1191.00px;font-size:28px;font-weight:400;color:#1f1f1f;letter-spacing:0.25px;">Dec 01, 2025</div>
<div class="t" style="left:847.80px;top:1191.00px;font-size:28px;font-weight:400;color:#1f1f1f;letter-spacing:0.2px;">Other leave</div>
<div class="t" style="left:1192.00px;top:1191.00px;font-size:28px;font-weight:400;color:#1f1f1f;letter-spacing:0.2px;">Asia Pham</div>
<div class="t" style="left:1499.30px;top:1189.70px;font-size:22px;font-weight:400;color:#ffffff;">Rejected</div>
<div class="t" style="left:1743.20px;top:1191.00px;font-size:28px;font-weight:400;color:#1f1f1f;letter-spacing:0.4px;">Nov 26, 2025 10:23 PM</div>
<div class="t" style="left:2078.00px;top:1326.30px;font-size:28px;font-weight:400;color:#666666;letter-spacing:0.25px;">Rows per page</div>
<div class="t" style="left:2287.00px;top:1326.00px;font-size:28px;font-weight:700;color:#1f2b4d;">25</div>
</body></html>
